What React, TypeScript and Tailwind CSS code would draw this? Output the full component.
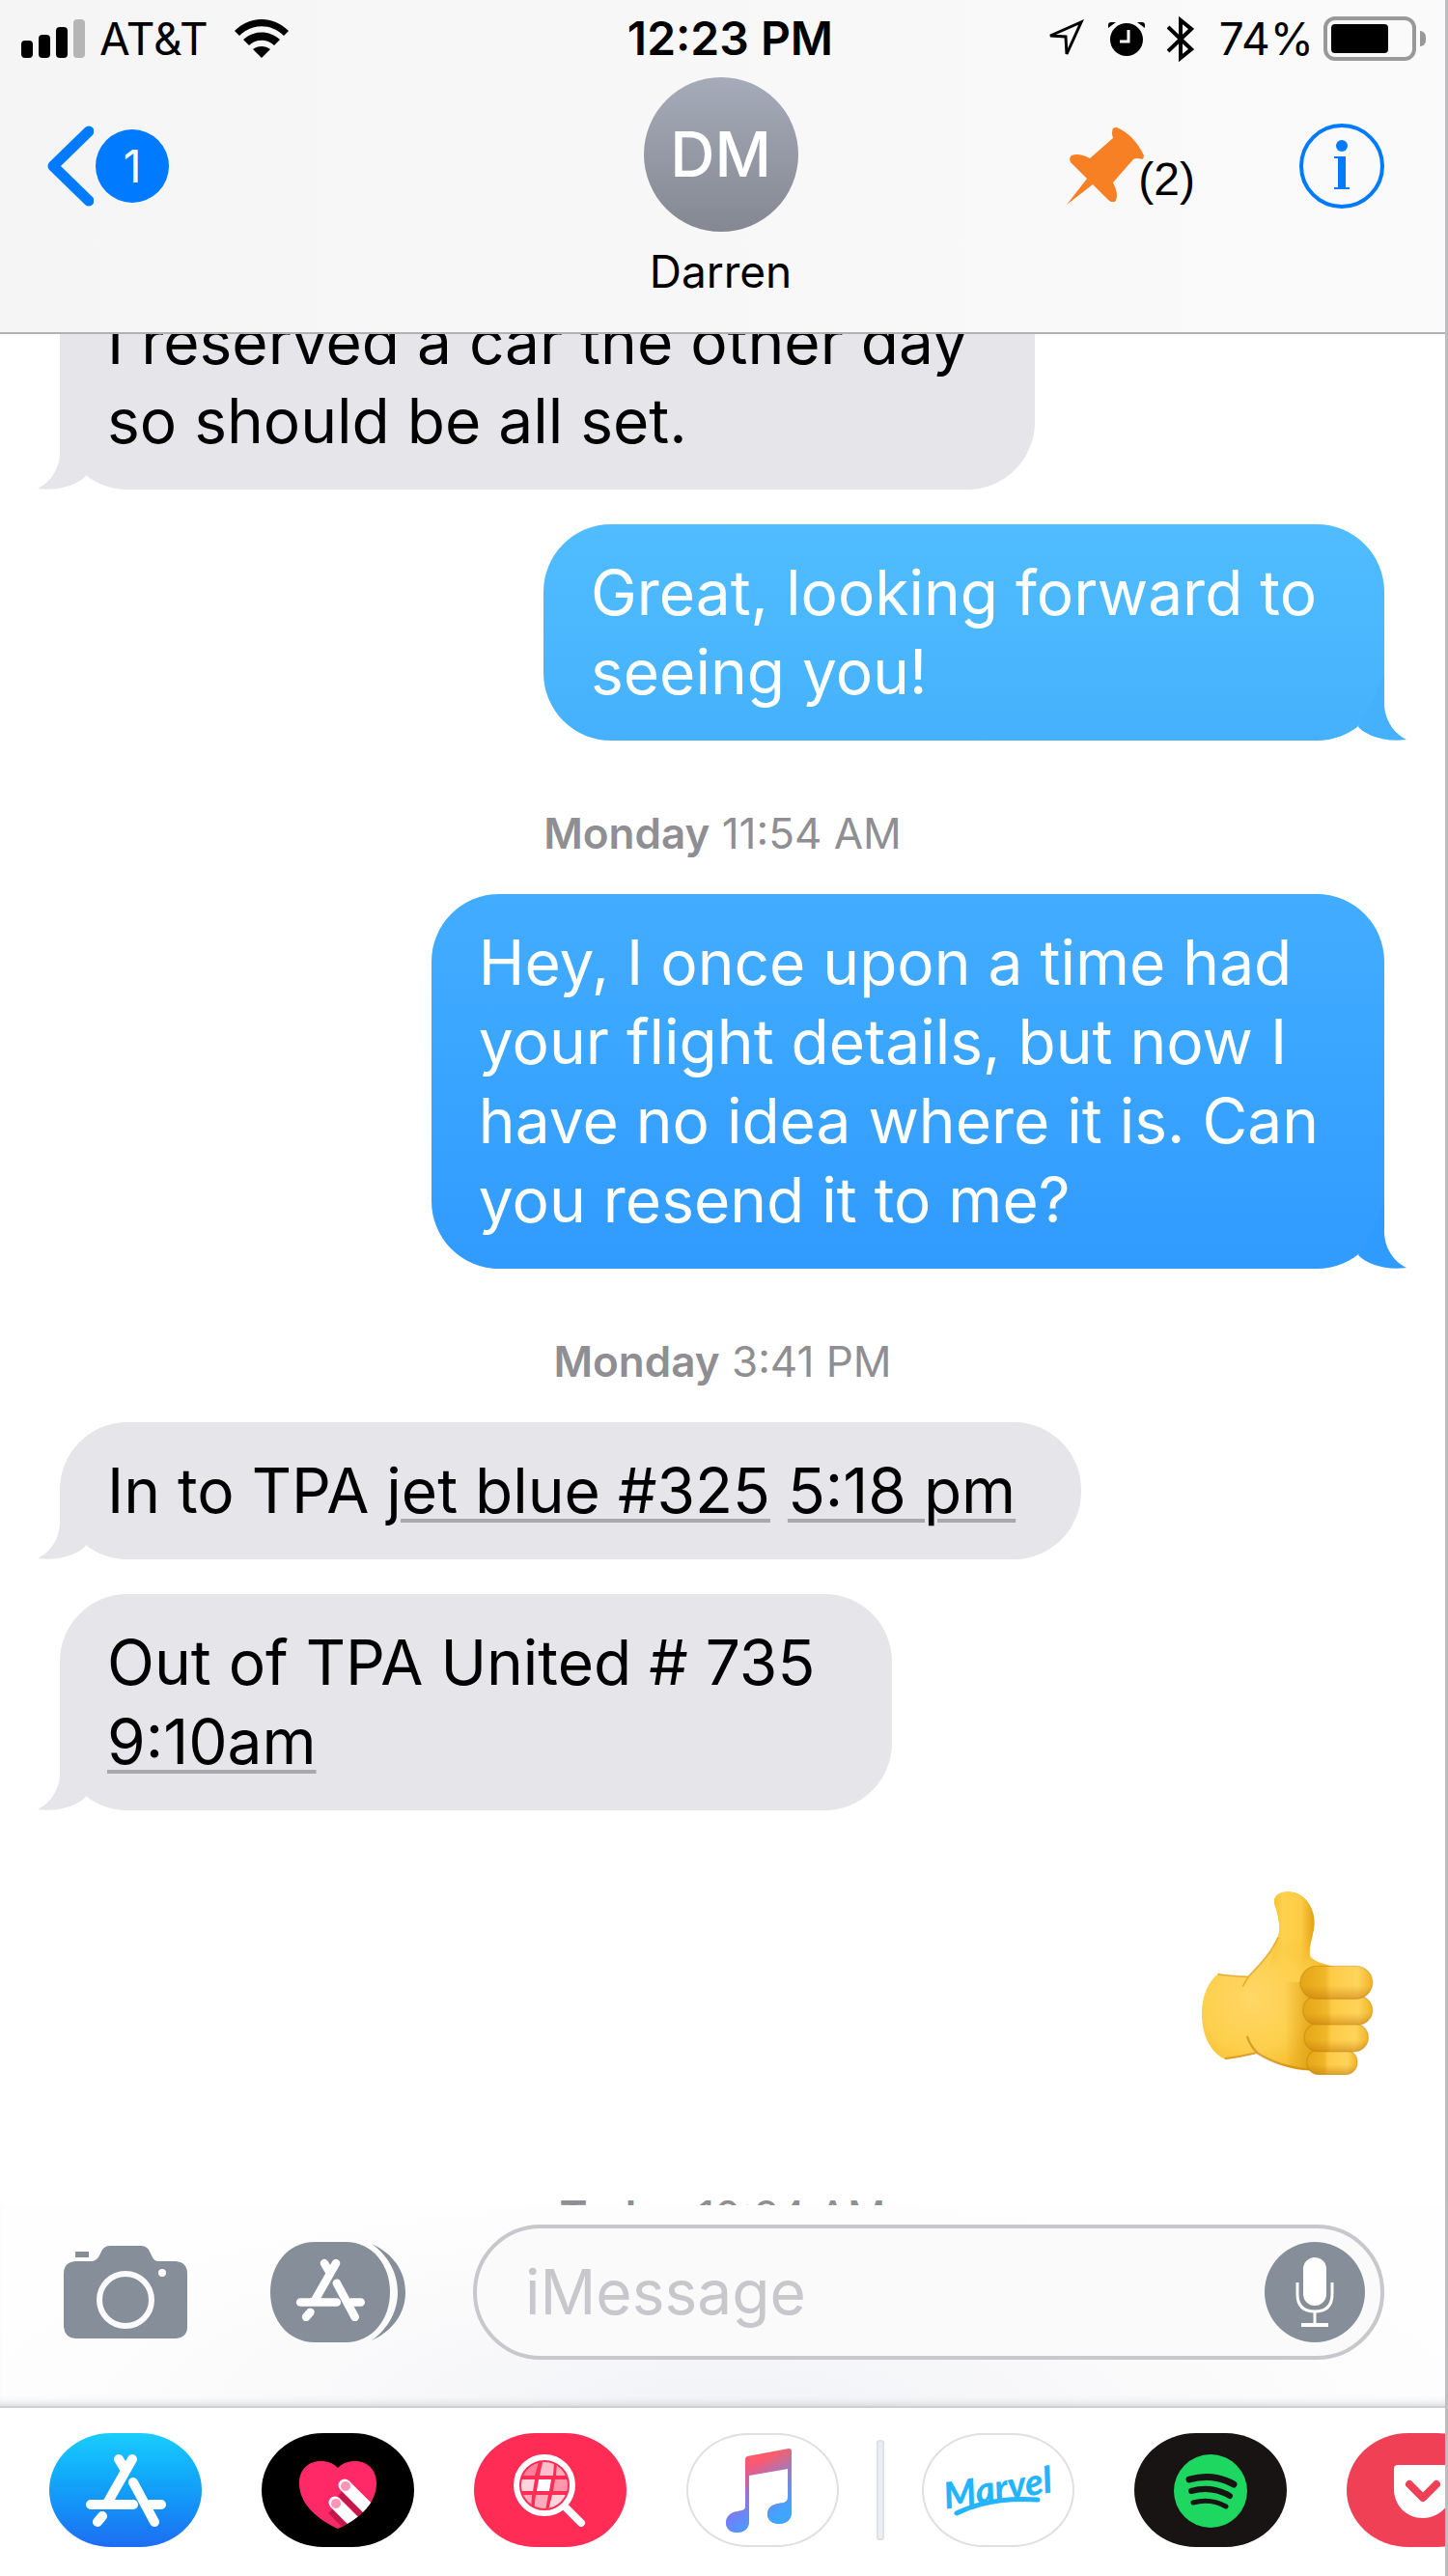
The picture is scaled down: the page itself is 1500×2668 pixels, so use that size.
import React, { useState } from 'react';

interface BubbleProps {
  sender: 'me' | 'them';
  className?: string;
  tailColor: string;
  children: React.ReactNode;
}

const Bubble: React.FC<BubbleProps> = ({ sender, className = '', tailColor, children }) => (
  <div className={`flex ${sender === 'me' ? 'justify-end pr-[63px]' : 'justify-start pl-[62px]'}`}>
    <div className={`relative rounded-[70px] py-[30px] pl-[49px] text-[64px] leading-[82px] ${className}`}>
      <svg
        className={`absolute bottom-0 w-[52px] h-[70px] ${sender === 'me' ? '-right-[23px] -scale-x-100' : '-left-[23px]'}`}
        viewBox="0 0 52 70"
        aria-hidden="true"
      >
        <path d="M23 0V32C23 48 13 63 0 69C20 72 40 66 50 56L33 26Z" fill={tailColor} />
      </svg>
      <p>{children}</p>
    </div>
  </div>
);

const DayStamp: React.FC<{ day: string; time: string }> = ({ day, time }) => (
  <p className="text-center text-[44px] leading-[44px] text-[#8e8e93]">
    <span className="font-semibold">{day}</span> {time}
  </p>
);

const DataLink: React.FC<{ children: React.ReactNode }> = ({ children }) => (
  <a href="#" className="underline decoration-[#a9a9ad] decoration-4 underline-offset-[6px]">{children}</a>
);

const AppStoreGlyph: React.FC<{ className?: string }> = ({ className }) => (
  <svg className={className} viewBox="0 0 84 76" fill="none" stroke="white" strokeWidth="10" strokeLinecap="round" aria-hidden="true">
    <path d="M6 53H50M68 53H79" />
    <path d="M49 6L24 50" />
    <path d="M35 6L41 16" />
    <path d="M18 65L13 71" />
    <path d="M50 30L72 71" />
  </svg>
);

const StatusBar: React.FC = () => {
  const battery = 74;

  return (
    <div className="grid grid-cols-[1fr_auto_1fr] items-center h-20 pl-[22px] pr-[20px]">
      <div className="flex items-center">
        <div className="flex items-end gap-[6px] h-10">
          <div className="w-3 h-[18px] rounded-[4px] bg-black" />
          <div className="w-3 h-6 rounded-[4px] bg-black" />
          <div className="w-3 h-8 rounded-[4px] bg-black" />
          <div className="w-3 h-10 rounded-[4px] bg-[#b5b5b5]" />
        </div>
        <span className="ml-[15px] text-[46px] leading-[46px]">AT&amp;T</span>
        <svg className="ml-[27px] w-14 h-10" viewBox="0 0 56 40" aria-label="Wi-Fi">
          <path d="M0 12C16-4 40-4 56 12L51 17C38 4 18 4 5 17Z" />
          <path d="M9 21C20 11 36 11 47 21L41 27C34 20 22 20 15 27Z" />
          <path d="M19 31C24 27 32 27 37 31L28 40Z" />
        </svg>
      </div>

      <span className="pl-[14px] text-[48px] leading-[48px] font-semibold">12:23 PM</span>

      <div className="flex items-center justify-end">
        <svg className="w-10 h-10" viewBox="0 0 40 40" fill="none" stroke="black" strokeWidth="3" aria-label="Location">
          <path d="M5 17L37 3L22 36L21 18Z" />
        </svg>
        <svg className="ml-6 w-10 h-10" viewBox="0 0 40 40" aria-label="Alarm">
          <circle cx="20" cy="21" r="17" />
          <path d="M1 9V6Q1 3 4 3H9ZM39 9V6Q39 3 36 3H31Z" />
          <path d="M22 11V23H13" fill="none" stroke="white" strokeWidth="3" />
        </svg>
        <svg className="ml-[22px] w-7 h-12" viewBox="0 0 28 48" fill="none" stroke="black" strokeWidth="4" aria-label="Bluetooth">
          <path d="M1 12L25 35L14 44V5L25 14L1 37" />
        </svg>
        <span className="ml-[26px] text-[46px] leading-[46px]">{battery}%</span>
        <div className="ml-[10px] w-24 h-[46px] rounded-[12px] border-4 border-[#999] p-1">
          <div className="h-full rounded-[4px] bg-black" style={{ width: `${battery}%` }} />
        </div>
        <div className="ml-1 w-[6px] h-4 rounded-r-full bg-[#999]" />
      </div>
    </div>
  );
};

const Header: React.FC = () => (
  <header className="border-b-2 border-[#b2b2b2] bg-linear-to-r from-[#f5f5f6] to-[#fafafa]">
    <StatusBar />
    <div className="grid grid-cols-[1fr_auto_1fr] items-start pl-[49px] pr-[63px]">
      <button className="flex items-center gap-[2px] pt-[50px] justify-self-start" aria-label="Back, 1 unread">
        <svg className="w-12 h-[84px]" viewBox="0 0 48 84" fill="none" stroke="#007aff" strokeWidth="11" strokeLinecap="round" strokeLinejoin="round">
          <path d="M43 6L6 42L43 78" />
        </svg>
        <span className="flex items-center justify-center w-[76px] h-[76px] rounded-full bg-[#007aff] text-white text-[46px] leading-[46px]">1</span>
      </button>

      <div className="flex flex-col items-center pb-10 pl-[10px]">
        <div className="flex items-center justify-center w-40 h-40 rounded-full bg-linear-to-b from-[#a5abb9] to-[#858892] text-white text-[64px] leading-[64px] font-medium">DM</div>
        <h1 className="mt-[18px] text-[46px] leading-[46px]">Darren</h1>
      </div>

      <div className="flex items-center justify-end pt-[48px] gap-[108px]">
        <button className="flex items-end font-['Liberation_Sans',Arial,sans-serif] text-[48px] leading-[52px]" aria-label="Pinned messages (2)">
          <svg className="w-20 h-20" viewBox="0 0 80 80" fill="#f77f24">
            <path d="M0 80L21 53L4 36Q2 32 5 29Q13 26 24 32L48 11Q46 5 48 1Q49 0 52 0Q70 8 80 29Q80 32 78 33Q73 31 69 33L48 57Q54 69 51 76Q47 79 43 75L27 59Z" />
          </svg>
          <span className="-ml-[6px]">(2)</span>
        </button>
        <button aria-label="Info">
          <svg className="block w-[88px] h-[88px]" viewBox="0 0 88 88" fill="#007aff">
            <circle cx="44" cy="44" r="42" fill="none" stroke="#007aff" strokeWidth="4" />
            <circle cx="44" cy="23" r="6" />
            <path d="M36 34H48V66H52V68H36V66H40V36H36Z" />
          </svg>
        </button>
      </div>
    </div>
  </header>
);

const ThumbsUp: React.FC = () => (
  <svg className="w-[178px] h-[190px]" viewBox="134 118 534 572" role="img" aria-label="Thumbs up">
    <defs>
      <radialGradient id="palm" gradientUnits="userSpaceOnUse" cx="290" cy="450" r="270">
        <stop offset="0" stopColor="#ffd766" />
        <stop offset="0.6" stopColor="#fecf4c" />
        <stop offset="1" stopColor="#f2b828" />
      </radialGradient>
      <linearGradient id="thumb" x1="0" x2="1">
        <stop offset="0" stopColor="#f6bb29" />
        <stop offset="0.3" stopColor="#fed04c" />
        <stop offset="0.7" stopColor="#fecd46" />
        <stop offset="1" stopColor="#e3a112" />
      </linearGradient>
      <linearGradient id="thumbFade" x1="0" x2="0" y1="0" y2="1">
        <stop offset="0.6" stopColor="white" />
        <stop offset="1" stopColor="black" />
      </linearGradient>
      <mask id="thumbMask" maskContentUnits="objectBoundingBox">
        <rect width="1" height="1" fill="url(#thumbFade)" />
      </mask>
      <linearGradient id="finger" x1="0" x2="1">
        <stop offset="0" stopColor="#e3a617" />
        <stop offset="0.35" stopColor="#f0b728" />
        <stop offset="0.42" stopColor="#fecb47" />
        <stop offset="0.8" stopColor="#ffd35a" />
        <stop offset="1" stopColor="#f0b423" />
      </linearGradient>
      <linearGradient id="shade" x1="0" x2="0" y1="0" y2="1">
        <stop offset="0.6" stopColor="#b96a00" stopOpacity="0" />
        <stop offset="1" stopColor="#b96a00" stopOpacity="0.45" />
      </linearGradient>
      <linearGradient id="crease" x1="0" x2="1">
        <stop offset="0" stopColor="#dd9d10" stopOpacity="0" />
        <stop offset="1" stopColor="#dd9d10" stopOpacity="0.8" />
      </linearGradient>
    </defs>
    <path d="M185 374C210 380 250 382 278 384C310 350 350 310 370 262C380 235 372 190 360 158C353 130 380 119 403 119C450 119 484 165 484 215C483 255 466 280 470 318C480 335 515 345 545 352L560 500L480 676C420 678 360 655 306 622C270 628 235 640 205 641C115 600 110 430 185 374Z" fill="url(#palm)" />
    <path mask="url(#thumbMask)" d="M370 262C380 235 372 190 360 158C353 130 380 119 403 119C450 119 484 165 484 215C483 255 466 280 470 318L440 360H340Z" fill="url(#thumb)" />
    <path d="M185 376Q230 383 278 384L262 412M278 384C310 350 350 310 370 262" fill="none" stroke="#dd9a12" strokeWidth="5" strokeLinecap="round" opacity="0.7" />
    <path d="M275 572Q285 600 306 622Q380 668 470 672" fill="none" stroke="#c27c0c" strokeWidth="7" strokeLinecap="round" opacity="0.6" />
    <path d="M205 639Q250 634 300 622" fill="none" stroke="#cf8a10" strokeWidth="6" opacity="0.7" />
    <path d="M390 400H480V668Q430 672 400 660Z" fill="url(#crease)" />
    {[
      { x: 460, y: 612, w: 158, h: 77 },
      { x: 452, y: 530, w: 200, h: 87 },
      { x: 448, y: 444, w: 217, h: 89 },
      { x: 440, y: 351, w: 225, h: 102 },
    ].map(f => (
      <g key={f.y}>
        <rect x={f.x} y={f.y} width={f.w} height={f.h} rx={f.h / 2} fill="url(#finger)" />
        <rect x={f.x} y={f.y} width={f.w} height={f.h} rx={f.h / 2} fill="url(#shade)" stroke="#c07a0a" strokeWidth="4" strokeOpacity="0.4" />
      </g>
    ))}
  </svg>
);

const Composer: React.FC = () => {
  const [text, setText] = useState('');

  return (
    <div className="flex items-center pt-5 pb-12 pl-[66px] pr-[63px] border-b-2 border-[#cfd0d2] bg-[radial-gradient(ellipse_at_50%_100%,#f2f3f7_0%,#fafafb_45%,#fefefe_75%)] shadow-[inset_0_-8px_8px_-6px_#d4d5d8]">
      <button className="shrink-0 mr-[86px]" aria-label="Camera">
        <svg className="block w-32 h-24" viewBox="0 0 128 96" fill="#868e99">
          <rect x="12" y="6" width="14" height="6" />
          <path d="M12 16H28Q34 16 37 10L40 4Q43 0 48 0H80Q85 0 88 4L92 12Q94 16 98 16H116Q128 17 128 29V84Q128 95 116 96H12Q1 95 0 84V29Q0 17 12 16Z" />
          <circle cx="64" cy="56" r="27" fill="none" stroke="#fbfbfb" strokeWidth="6" />
          <circle cx="102" cy="28" r="4" fill="#fbfbfb" />
        </svg>
      </button>
      <button className="shrink-0 relative mr-[70px]" aria-label="Apps">
        <svg className="block w-[140px] h-[104px]" viewBox="0 0 140 104" fill="#868e99">
          <path d="M46 0H78C106 0 124 24 124 52S106 104 78 104H46C18 104 0 80 0 52S18 0 46 0Z" />
          <path d="M105 2C127 12 140 30 140 52S127 92 105 102C122 90 132 72 132 52S122 14 105 2Z" />
        </svg>
        <AppStoreGlyph className="absolute left-[26px] top-[17px] w-[72px]" />
      </button>
      <div className="flex flex-1 min-w-0 items-center h-[140px] pl-[50px] pr-4 rounded-full border-4 border-[#c7c7cc] bg-[#fafafa]">
        <input
          type="text"
          value={text}
          onChange={e => setText(e.target.value)}
          placeholder="iMessage"
          aria-label="iMessage"
          className="flex-1 min-w-0 text-[64px] leading-[82px] placeholder:text-[#c7c7cc] focus:outline-none"
        />
        <button className="shrink-0 flex items-center justify-center w-[104px] h-[104px] rounded-full bg-[#868e99]" aria-label="Record audio">
          <svg className="w-10 h-[72px]" viewBox="0 0 40 72" fill="none" stroke="white" strokeWidth="3">
            <rect x="8" y="0" width="24" height="50" rx="12" fill="white" stroke="none" />
            <path d="M2 26V38Q2 56 20 56T38 38V26M20 56V70" />
            <path d="M6 70H34" strokeWidth="4" />
          </svg>
        </button>
      </div>
    </div>
  );
};

const AppButton: React.FC<{ label: string; className: string; children: React.ReactNode }> = ({ label, className, children }) => (
  <button aria-label={label} className={`shrink-0 flex items-center justify-center w-[158px] h-[118px] rounded-[64px/59px] overflow-hidden ${className}`}>
    {children}
  </button>
);

const AppStrip: React.FC = () => (
  <nav className="flex items-center gap-[62px] pt-[26px] pb-[30px] pl-[51px] overflow-hidden bg-white" aria-label="iMessage apps">
    <AppButton label="App Store" className="bg-linear-to-b from-[#1bcdfd] to-[#1e6cf2]">
      <AppStoreGlyph className="w-[84px]" />
    </AppButton>

    <AppButton label="Digital Touch" className="bg-black">
      <svg viewBox="0 0 158 118" className="w-full">
        <defs>
          <clipPath id="heart">
            <path d="M79 36C90 24 119 26 119 52C119 76 96 91 79 99C62 91 39 76 39 52C39 26 68 24 79 36Z" />
          </clipPath>
        </defs>
        <g clipPath="url(#heart)">
          <rect width="158" height="118" fill="#ff2968" />
          <path d="M84 60L112 88M74 78L98 102" stroke="#c4184c" strokeWidth="14" />
          <path d="M86 54L120 88" stroke="white" strokeWidth="13" strokeLinecap="round" />
          <path d="M76 72L104 100" stroke="white" strokeWidth="13" strokeLinecap="round" />
          <circle cx="87" cy="55" r="5" fill="#ff94b4" />
          <circle cx="77" cy="73" r="5" fill="#ff94b4" />
        </g>
      </svg>
    </AppButton>

    <AppButton label="Images" className="bg-[#ff2d55]">
      <svg viewBox="0 0 158 118" className="w-full">
        <defs>
          <clipPath id="lens">
            <circle cx="73" cy="54" r="24" />
          </clipPath>
        </defs>
        <g clipPath="url(#lens)" fill="white">
          <path d="M48 30H67L63 44H48Z" opacity="0.4" />
          <path d="M71 30H83L82 44H68Z" opacity="0.7" />
          <path d="M86 30H99V44H85Z" opacity="0.6" />
          <path d="M48 48H63L61 60H48Z" opacity="0.8" />
          <path d="M67 48H80L78 60H65Z" />
          <path d="M84 48H99V60H82Z" opacity="0.5" />
          <path d="M48 64H60L59 80H48Z" opacity="0.6" />
          <path d="M64 64H77L74 80H62Z" opacity="0.6" />
          <path d="M81 64H99V80H77Z" opacity="0.8" />
        </g>
        <circle cx="73" cy="54" r="29" fill="none" stroke="white" strokeWidth="6" />
        <path d="M94 76L111 93" stroke="white" strokeWidth="8" strokeLinecap="round" />
      </svg>
    </AppButton>

    <AppButton label="Music" className="border-2 border-[#e0e0e0]">
      <svg viewBox="2 2 154 114" className="w-full">
        <defs>
          <linearGradient id="note" gradientUnits="userSpaceOnUse" x1="0" y1="24" x2="0" y2="98">
            <stop offset="0" stopColor="#ff5a68" />
            <stop offset="1" stopColor="#9a5cff" />
          </linearGradient>
          <linearGradient id="noteBlue" gradientUnits="userSpaceOnUse" x1="66" y1="38" x2="100" y2="82">
            <stop offset="0" stopColor="#3ea6ff" stopOpacity="0" />
            <stop offset="1" stopColor="#3ea6ff" />
          </linearGradient>
        </defs>
        {['url(#note)', 'url(#noteBlue)'].map(fill => (
          <path
            key={fill}
            d="M61 27Q61 25 63 24L106 16Q109 16 109 19V82C109 90 103 94 96 94C89 94 84 90 84 84C84 77 89 74 95 73C103 72 105 71 105 66V37L65 44V91C65 99 60 103 52 103C46 103 41 99 41 93C41 86 46 82 53 81C60 80 61 79 61 76Z"
            fill={fill}
          />
        ))}
      </svg>
    </AppButton>

    <div className="shrink-0 -mx-[23px] w-2 h-[104px] rounded-[3px] border-2 border-[#e0e0e8] bg-[#ededf6]" />

    <AppButton label="Marvel" className="border-2 border-[#e0e0e0]">
      <svg viewBox="2 2 154 114" className="w-full">
        <text
          x="79"
          y="70"
          textAnchor="middle"
          transform="rotate(-9 79 60)"
          fill="#23b4fb"
          className="font-['Lato',sans-serif] text-[38px] font-black italic"
        >
          Marvel
        </text>
        <path d="M36 83C60 71 88 67 120 69" fill="none" stroke="#23b4fb" strokeWidth="5" strokeLinecap="round" />
      </svg>
    </AppButton>

    <AppButton label="Spotify" className="bg-[#191414]">
      <svg viewBox="0 0 158 118" className="w-full" fill="none" stroke="#191414" strokeLinecap="round">
        <circle cx="79" cy="60" r="38" fill="#1ed760" stroke="none" />
        <path d="M57 48Q82 41 103 53" strokeWidth="7" />
        <path d="M59 60Q80 54 99 65" strokeWidth="6" />
        <path d="M61 72Q79 67 95 76" strokeWidth="5" />
      </svg>
    </AppButton>

    <AppButton label="Pocket" className="bg-[#ef4056]">
      <svg viewBox="0 0 158 118" className="w-full">
        <path d="M53 33H105Q109 33 109 37V58C109 75 96 88 79 88S49 75 49 58V37Q49 33 53 33Z" fill="white" />
        <path d="M65 53L79 67L93 53" fill="none" stroke="#ef4056" strokeWidth="8" strokeLinecap="round" strokeLinejoin="round" />
      </svg>
    </AppButton>
  </nav>
);

const App: React.FC = () => (
  <div className="flex flex-col min-h-screen bg-white border-r-[3px] border-[#bdbdbf] font-['Inter',sans-serif] text-black overflow-x-hidden">
    <Header />

    {/* Thread, scrolled so the first bubble runs under the header */}
    <main className="flex-1 overflow-hidden">
      <div className="-mt-[63px]">
        <Bubble sender="them" className="rounded-t-none pr-[70px] bg-[#e5e5ea]" tailColor="#e5e5ea">
          I reserved a car the other day<br />so should be all set.
        </Bubble>
      </div>
      <div className="mt-9">
        <Bubble sender="me" className="pr-[70px] text-white bg-linear-to-b from-[#50bdff] to-[#45b1fd]" tailColor="#45b1fd">
          Great, looking forward to<br />seeing you!
        </Bubble>
      </div>
      <div className="pt-[74px] pb-[41px]">
        <DayStamp day="Monday" time="11:54 AM" />
      </div>
      <Bubble sender="me" className="pr-[68px] text-white bg-linear-to-b from-[#42adff] to-[#309bfe]" tailColor="#309bfe">
        Hey, I once upon a time had<br />your flight details, but now I<br />have no idea where it is. Can<br />you resend it to me?
      </Bubble>
      <div className="pt-[74px] pb-[41px]">
        <DayStamp day="Monday" time="3:41 PM" />
      </div>
      <Bubble sender="them" className="pr-[68px] bg-[#e5e5ea]" tailColor="#e5e5ea">
        In to TPA <DataLink>jet blue #325</DataLink> <DataLink>5:18 pm</DataLink>
      </Bubble>
      <div className="mt-9">
        <Bubble sender="them" className="pr-[80px] bg-[#e5e5ea]" tailColor="#e5e5ea">
          Out of TPA United # 735<br /><DataLink>9:10am</DataLink>
        </Bubble>
      </div>
      <div className="flex justify-end pt-[84px] pr-[74px]">
        <ThumbsUp />
      </div>
      <div className="mt-[124px] h-[11px] overflow-hidden">
        <DayStamp day="Today" time="10:24 AM" />
      </div>
    </main>

    <Composer />
    <AppStrip />
  </div>
);

export default App;
